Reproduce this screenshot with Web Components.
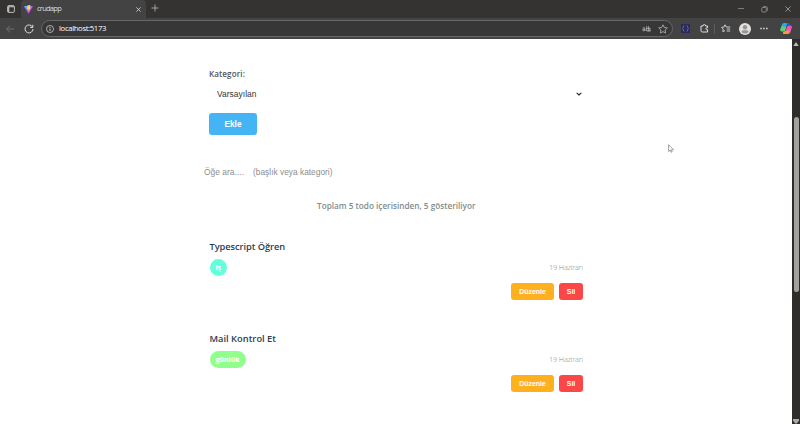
<!DOCTYPE html>
<html lang="tr"><head><meta charset="utf-8"><title>crudapp</title>
<style>html,body{margin:0;width:800px;height:424px;overflow:hidden;background:#fff;font-family:"Open Sans","Noto Sans",sans-serif}</style></head>
<body><browser-window></browser-window>
<script>
const define=(name,html,after)=>customElements.define(name,class extends HTMLElement{
  connectedCallback(){
    if(this.shadowRoot)return;
    const t=document.createElement('template');
    t.innerHTML=typeof html==='function'?html(this):html;
    this.attachShadow({mode:'open'}).append(t.content.cloneNode(true));
    if(after)after(this);
  }
});

// A single line of text whose tracking is adjusted to span the width in "w".
define('fit-text','<style>:host{display:inline-block;white-space:nowrap}span{display:inline-block}</style><span><slot></slot></span>',el=>{
  const s=el.shadowRoot.querySelector('span'),w=+el.getAttribute('w');
  const n=[...el.textContent].length;
  el.style.width=w+'px';
  s.style.letterSpacing=((w-s.getBoundingClientRect().width)/n)+'px';
});

define('tab-strip',`<style>
:host{display:flex;height:18px;background:#343332;color:#ddd;align-items:stretch}
.ws{width:21px;display:flex;align-items:center;justify-content:center}
.tab{width:125px;box-sizing:border-box;background:#434343;border-radius:4px 4px 0 0;display:flex;align-items:center;padding:0 5px 0 3px;font-size:7.5px;line-height:16px}
.tab fit-text{margin-left:4px;flex:none;padding-bottom:2px}.x{margin-left:auto}
.plus{margin-left:5px;align-self:center;margin-top:-2px}
.win{margin-left:auto;display:flex;align-items:center;gap:17px;padding-right:9px}
svg{display:block;flex:none}
</style>
<div class="ws"><svg width="8" height="8" viewBox="0 0 8 8"><rect x=".6" y=".6" width="6.8" height="6.8" rx="1.2" fill="none" stroke="#ccc" stroke-width=".9"/><path d="M1 1.7h6M1.7 2v5" stroke="#ccc" stroke-width="1.1"/></svg></div>
<div class="tab"><svg width="9" height="9" viewBox="0 0 9 9"><defs><linearGradient id="g" x2="1" y2="1"><stop stop-color="#45caff"/><stop offset=".6" stop-color="#c44cff"/></linearGradient></defs><path d="M0 1.2L4.5 .8 9 1.2 4.6 8.8z" fill="url(#g)"/><path d="M3.4 .6L6.6 0 5.8 2.4 6.9 2.3 4.4 7 4.7 4.2 3.2 4.5z" fill="#ffdd35"/></svg><fit-text w="24">crudapp</fit-text>
<svg class="x" width="5" height="5" viewBox="0 0 5 5"><path d="M.4 .4l4.2 4.2M4.6 .4L.4 4.6" stroke="#ddd" stroke-width=".8"/></svg></div>
<svg class="plus" width="8" height="8" viewBox="0 0 8 8"><path d="M4 .5v7M.5 4h7" stroke="#bbb" stroke-width=".8"/></svg>
<div class="win"><svg width="6" height="6"><path d="M0 2.5h6" stroke="#999" stroke-width=".7"/></svg>
<svg width="7" height="7" viewBox="0 0 7 7"><rect x=".8" y="1.5" width="4.5" height="4.5" rx=".8" fill="none" stroke="#999" stroke-width=".8"/><path d="M2 .6h3.2q1.2 0 1.2 1.2v3" fill="none" stroke="#999" stroke-width=".7"/></svg>
<svg width="6" height="6" viewBox="0 0 6 6"><path d="M.4 .4l5.2 5.2M5.6 .4L.4 5.6" stroke="#aaa" stroke-width=".8"/></svg></div>`);

define('address-bar',`<style>
:host{display:flex;height:21px;background:#434343;align-items:center;box-sizing:border-box;padding:0 8px 0 6px}
svg{display:block;flex:none}
.r{margin:0 7px 0 10px}
.f{width:632px;height:17px;box-sizing:border-box;border:1px solid #686868;border-radius:9px;background:#373738;display:flex;align-items:center;padding:0 4px 0 4px;color:#fff;font-size:7.7px;line-height:14px;flex:none}
.f fit-text{margin-left:5px;padding-bottom:1px}.aa{margin-left:auto;margin-right:7px}
.ext{margin-left:8px}.puz{margin-left:10px}.sep{width:1px;height:10px;background:#5c5c5c;margin:0 6px 0 5px}
.av{margin-left:8px}.dots{margin-left:9px}.cop{margin-left:auto}
</style>
<svg width="8" height="8" viewBox="0 0 8 8"><path d="M8 4H.6M4 .6L.6 4 4 7.4" fill="none" stroke="#777" stroke-width=".9"/></svg>
<svg class="r" width="10" height="10" viewBox="0 0 10 10"><path d="M8.6 3.2A4 4 0 1 0 9 5M8.8 .8v2.6H6.2" fill="none" stroke="#ddd"/></svg>
<div class="f"><svg width="8" height="8" viewBox="0 0 8 8"><circle cx="4" cy="4" r="3.5" fill="none" stroke="#ccc" stroke-width=".8"/><path d="M4 3.5v2.4M4 1.9v.9" stroke="#ddd" stroke-width=".9"/></svg><fit-text w="47">localhost:5173</fit-text>
<svg class="aa" width="9" height="8" viewBox="0 0 9 8"><path d="M.6 3.1q1.8-1 2.4.3v2.6M3 4.1Q.5 4 .5 5.2T3 5.2M4.7 1.2v4.8M4.7 3.3h3.5M6.6 1.2v5M4.7 6h3.8M8 3.2v3" fill="none" stroke="#bbb" stroke-width=".8"/></svg>
<svg width="10" height="10" viewBox="0 0 10 10"><path d="M5 .8l1.3 2.7 3 .4-2.2 2.1.5 3L5 7.6 2.4 9l.5-3L.7 3.9l3-.4z" fill="none" stroke="#aaa" stroke-width=".9" stroke-linejoin="round"/></svg></div>
<svg class="ext" width="9" height="9" viewBox="0 0 9 9"><rect width="9" height="9" rx="1" fill="#29295b"/><path d="M3.3 1.5q-1 0-1 1.4T1.5 4.5Q2.3 4.5 2.3 6T3.3 7.5M5.7 1.5q1 0 1 1.4t.8 1.6q-.8 0-.8 1.5T5.7 7.5" stroke="#8062bd" fill="none" stroke-width=".9"/></svg>
<svg class="puz" width="9" height="9" viewBox="0 0 9 9"><path d="M1 2h2q0-1.5 1.3-1.5T5.6 2h2v1.7q-1.7-.3-1.7 1t1.7 1V8H2.2Q1 8 1 6.8z" fill="none" stroke="#ddd"/></svg>
<div class="sep"></div>
<svg width="10" height="9" viewBox="0 0 10 9"><path d="M6 3L5.1 3 4 .8 2.9 3 .6 3.4l1.6 1.7-.4 2.6L4 6.5M6 3h3.2M5.7 5h3.5M5.7 7h3.5" fill="none" stroke="#ddd" stroke-width=".9"/></svg>
<svg class="av" width="12" height="12" viewBox="0 0 12 12"><circle cx="6" cy="6" r="6" fill="#e3e2e1"/><circle cx="6" cy="4.3" r="2.2" fill="#99948f"/><path d="M2.5 9q0-1.8 1.5-1.8h4q1.5 0 1.5 1.8Q8.2 10.6 6 10.6T2.5 9" fill="#99948f"/></svg>
<svg class="dots" width="8" height="3" viewBox="0 0 8 3"><path d="M.3 .8h1.5v1.4H.3zM3.2 .8h1.5v1.4H3.2zM6.1 .8h1.5v1.4H6.1z" fill="#ddd"/></svg>
<svg class="cop" width="12" height="11" viewBox="0 0 12 11"><path d="M4 0h4q1 0 1.2 1L7 1.3 5.5 7Q5 8.5 3.5 8.5H1.6Q0 8.5.4 6.5L1.8 1.8Q2.3 0 4 0" fill="#22a9ef"/><path d="M2.5 3L6 4 4.8 8.2H1.6Q0 8.2.4 6.5L1.2 4z" fill="#65ce64"/><path d="M8.5 2.5h1.8q2 0 1.5 2l-1.4 4.7q-.5 1.8-2.2 1.8H4q-1.4 0-1-1.5l2.2-.3L7 4q.4-1.5 1.5-1.5" fill="#ed55bb"/><path d="M4.6 8.3L9.8 7l-.7 2.6Q8.6 11 7 11H4q-1.4 0-1-1.5z" fill="#ff9545"/><path d="M6.5 0H8q1 0 1.3 1l.4 1.5H8z" fill="#3855d6"/></svg>`);

define('scroll-rail',`<style>:host{width:8px;background:#2e2d2b;display:flex;flex-direction:column;align-items:center;box-sizing:border-box;padding:3px 0 0}
.thumb{width:5px;height:175px;border-radius:3px;background:#a3a19e;margin-top:71px}svg{display:block}.d{margin-top:auto}</style>
<svg width="6" height="4"><path d="M3 0l2.7 4H.3z" fill="#bbb"/></svg><div class="thumb"></div><svg class="d" width="6" height="5"><path d="M0 0h6v1.5L3.8 4.6H2.2L0 1.5z" fill="#aaa"/></svg>`);

define('app-button',el=>`<style>:host{display:flex;align-items:center;justify-content:center;box-sizing:border-box;color:#fff;font-weight:700;font-family:"Liberation Sans",sans-serif;border-radius:3px;background:${el.getAttribute('tone')};width:${el.getAttribute('bw')}px;height:${el.getAttribute('bh')}px;font-size:${el.getAttribute('fs')}px;line-height:1}</style><slot></slot>`);

define('todo-item',el=>`<style>
:host{display:block;height:92px;color:#2c3e50}
.t{font:600 9.3px/19px "Open Sans","Noto Sans",sans-serif;height:22px}
.m{display:flex;justify-content:space-between;align-items:flex-start;height:24px}
.b{display:flex;align-items:center;justify-content:center;box-sizing:border-box;height:17px;border-radius:9px;color:#fff;font:700 7px/15px "Open Sans",sans-serif}
.d{font:300 7.2px/17px "Open Sans",sans-serif;color:#7f8c8d}
.a{display:flex;justify-content:flex-end;gap:5px}
</style><div class="t"><fit-text w="${el.getAttribute('tw')}">${el.getAttribute('title')}</fit-text></div>
<div class="m"><div class="b" style="width:${el.getAttribute('cw')}px;background:${el.getAttribute('tone')}"><fit-text w="${el.getAttribute('lw')}">${el.getAttribute('cat')}</fit-text></div><div class="d"><fit-text w="34">19 Haziran</fit-text></div></div>
<div class="a"><app-button tone="#ffb01e" bw="43" bh="17" fs="7"><fit-text w="26.5">Düzenle</fit-text></app-button><app-button tone="#fb4747" bw="24" bh="17" fs="7"><fit-text w="8.5">Sil</fit-text></app-button></div>`);

define('todo-page',`<style>
:host{display:flex;flex-direction:column;flex:1;overflow:hidden;background:#fff;box-sizing:border-box;padding:27px 209px 0 209px}
:host>*{flex:none}
.k,.s,.e,.q,.c,.l{flex:none}
.k{height:16px;font:600 8.1px/16px "Open Sans",sans-serif;color:#555}
.s{height:20px;margin-top:2px;padding:0 1px 0 8px;display:flex;align-items:center;justify-content:space-between;font:8.4px/20px "Liberation Sans",sans-serif;color:#333}
.e{margin-top:9px}
.q{margin:27px 0 0 -5px;height:20px;font:8.4px/20px "Liberation Sans",sans-serif;color:#8e8e8e;display:flex;gap:9px}
.c{margin-top:14px;height:20px;padding-left:108px;font:600 8.2px/20px "Open Sans",sans-serif;color:#7f8c8d}
.l{margin:21px 0 0 .5px}
</style>
<div class="k"><fit-text w="36">Kategori:</fit-text></div>
<div class="s"><fit-text w="39.5">Varsayılan</fit-text><svg width="6" height="4" viewBox="0 0 6 4"><path d="M.7 .8L3 3 5.3 .8" fill="none" stroke="#222" stroke-width="1.1"/></svg></div>
<app-button class="e" tone="#45b4f5" bw="48" bh="22" fs="8.3"><fit-text w="17">Ekle</fit-text></app-button>
<div class="q"><fit-text w="40">Öğe ara....</fit-text><fit-text w="79.5">(başlık veya kategori)</fit-text></div>
<div class="c"><fit-text w="158.5">Toplam 5 todo içerisinden, 5 gösteriliyor</fit-text></div>
<div class="l"><todo-item title="Typescript Öğren" tw="75.5" cat="iş" cw="17.5" lw="5.5" tone="#64ffda"></todo-item><todo-item title="Mail Kontrol Et" tw="66.5" cat="günlük" cw="36" lw="24" tone="#90ff8c"></todo-item></div>`);

define('browser-window',`<style>:host{display:flex;flex-direction:column;width:800px;height:424px;position:relative}.v{display:flex;flex:1;min-height:0}.cursor{position:absolute;left:668px;top:144px}</style>
<tab-strip></tab-strip><address-bar></address-bar><div class="v"><todo-page></todo-page><scroll-rail></scroll-rail></div>
<svg class="cursor" width="6" height="9" viewBox="0 0 6 9"><path d="M.6 .7v6.9l1.6-1.5 1 2.2 1-.4-.9-2.1h2.2z" fill="#fff" stroke="#777" stroke-width=".7"/></svg>`);
</script></body></html>
